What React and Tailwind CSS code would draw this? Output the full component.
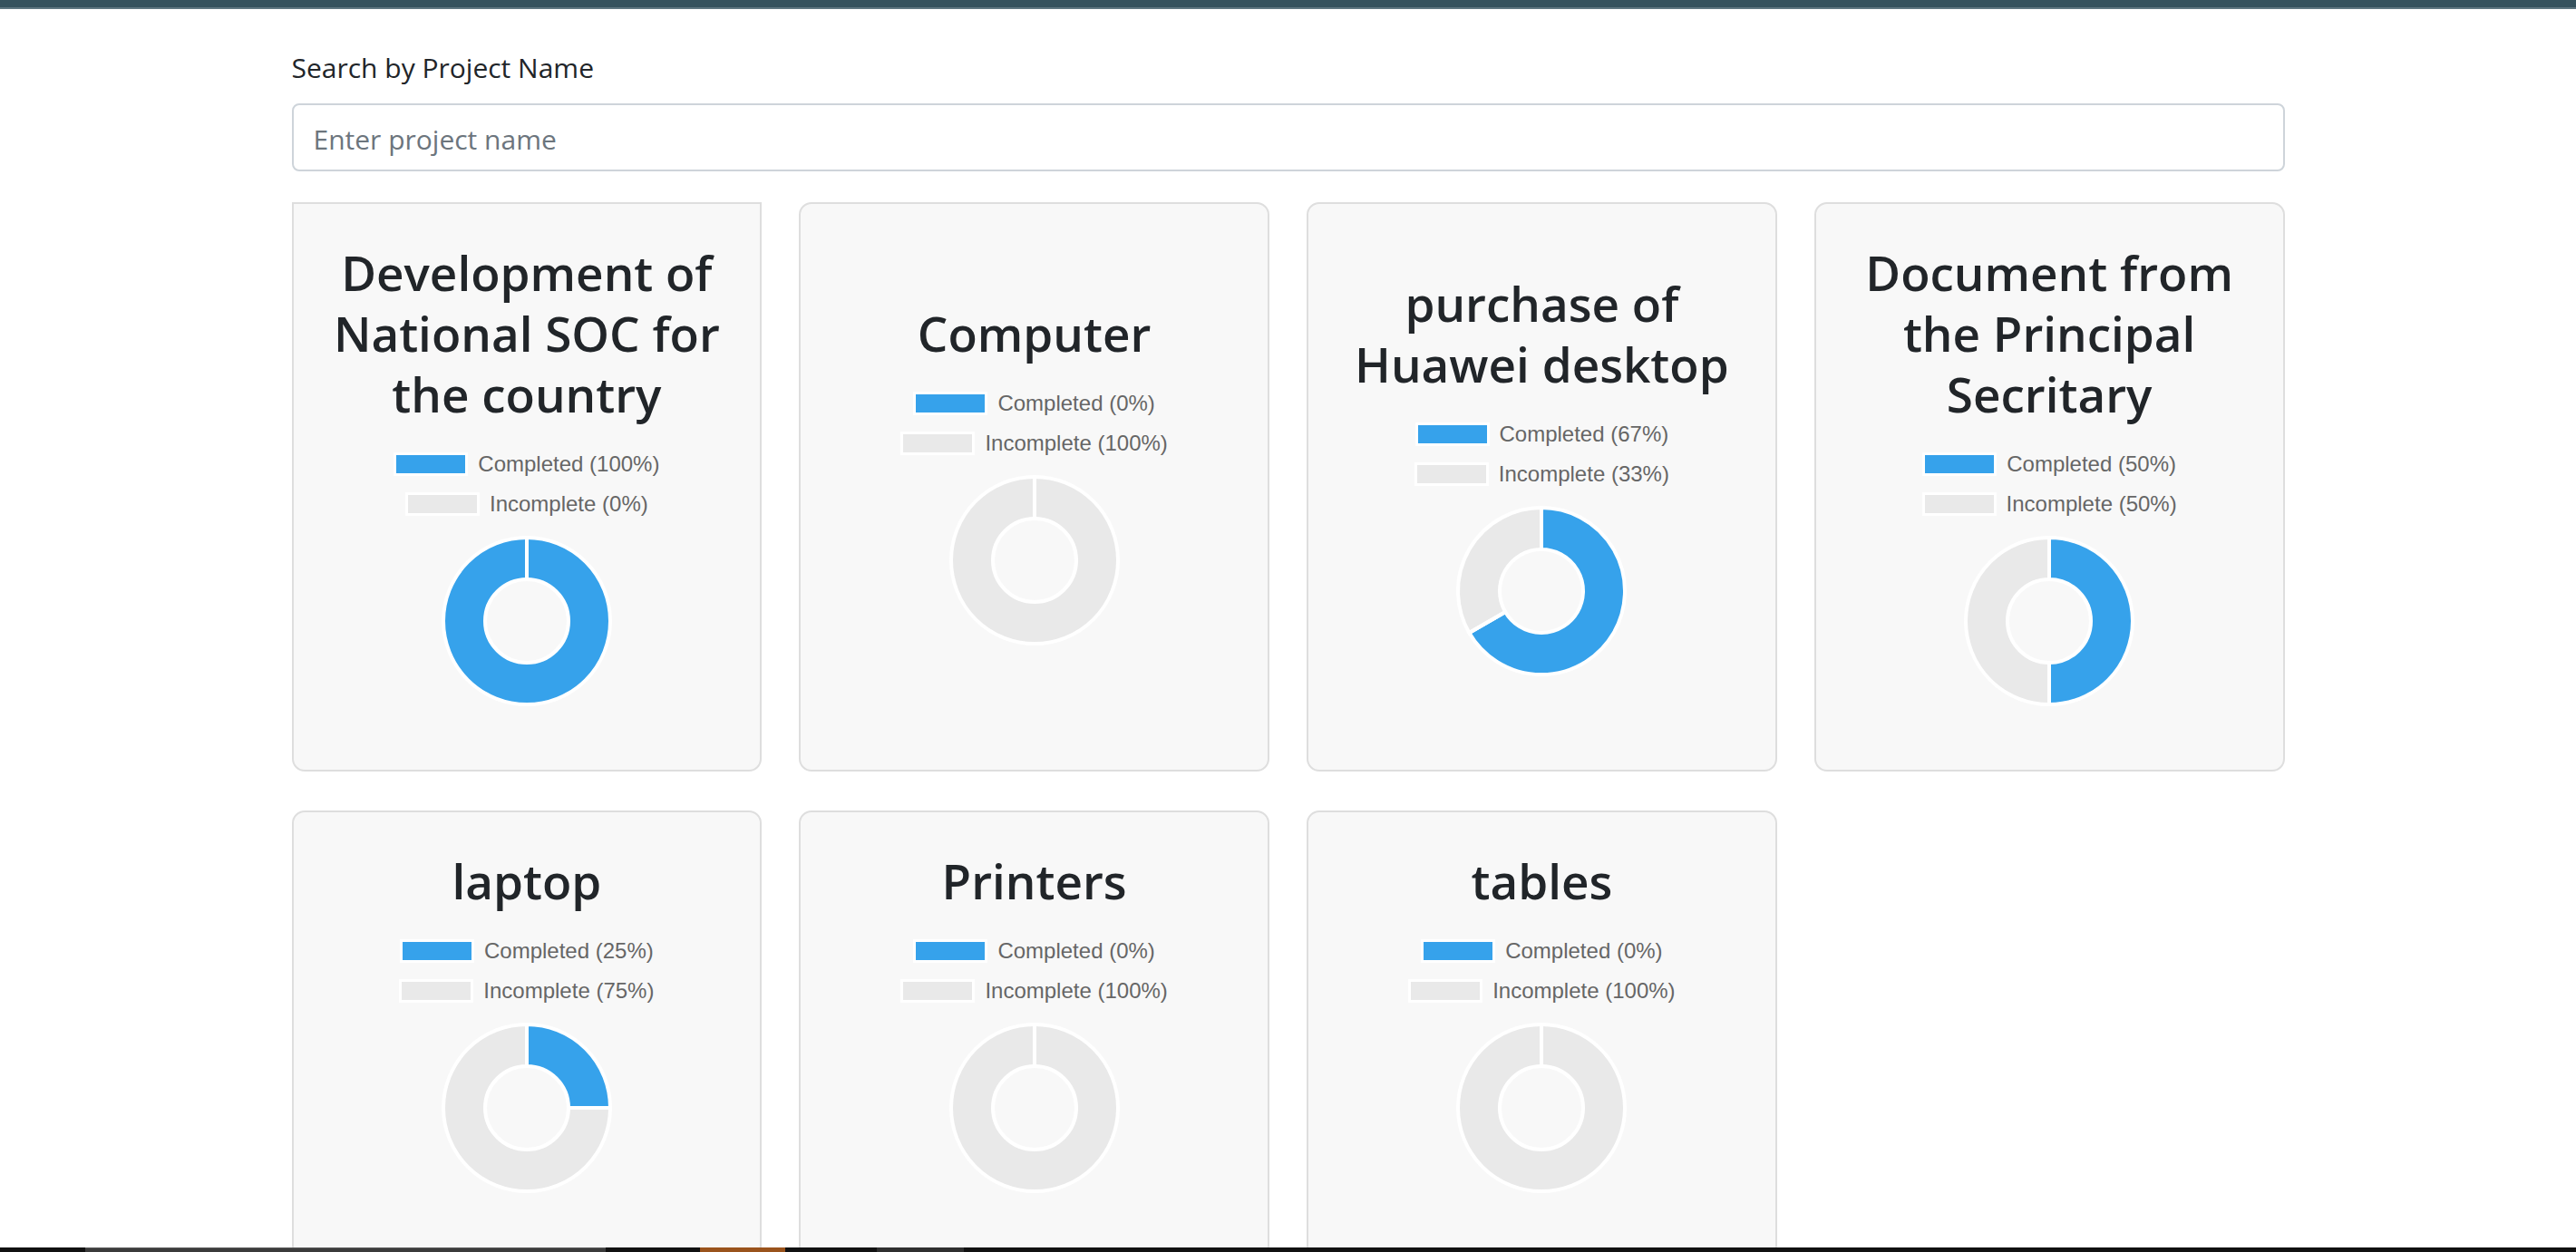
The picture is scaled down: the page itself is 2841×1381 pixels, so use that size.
import React from "react";

const projects = [
    { id: 1, name: "Development of\nNational SOC for\nthe country", done: 1, total: 1, squareTop: true },
    { id: 2, name: "Computer", done: 0, total: 1 },
    { id: 3, name: "purchase of\nHuawei desktop", done: 2, total: 3 },
    { id: 4, name: "Document from\nthe Principal\nSecritary", done: 1, total: 2 },
    { id: 5, name: "laptop", done: 1, total: 4 },
    { id: 6, name: "Printers", done: 0, total: 1 },
    { id: 7, name: "tables", done: 0, total: 1 },
];

const BLUE = "#36a2eb";
const GREY = "#e9e9e9";

// point on a circle, angle in degrees measured clockwise from 12 o'clock
const pt = (cx, cy, rad, deg) => {
    const a = (deg * Math.PI) / 180;
    return [cx + rad * Math.sin(a), cy - rad * Math.cos(a)];
};

const sector = (cx, cy, R, r, a0, a1) => {
    const large = a1 - a0 > 180 ? 1 : 0;
    const [x0, y0] = pt(cx, cy, R, a0);
    const [x1, y1] = pt(cx, cy, R, a1);
    const [x2, y2] = pt(cx, cy, r, a1);
    const [x3, y3] = pt(cx, cy, r, a0);
    return `M${x0} ${y0} A${R} ${R} 0 ${large} 1 ${x1} ${y1} L${x2} ${y2} A${r} ${r} 0 ${large} 0 ${x3} ${y3} Z`;
};

// whole ring, no seam
const ring = (cx, cy, R, r) =>
    `M${cx} ${cy - R} A${R} ${R} 0 1 1 ${cx} ${cy + R} A${R} ${R} 0 1 1 ${cx} ${cy - R} Z ` +
    `M${cx} ${cy - r} A${r} ${r} 0 1 0 ${cx} ${cy + r} A${r} ${r} 0 1 0 ${cx} ${cy - r} Z`;

const Donut = ({ done, total }) => {
    const size = 190;
    const c = size / 2;
    const R = 92;
    const r = 46;
    const split = (done / total) * 360;

    const segs = [];
    const pushArc = (a0, a1, color) => {
        if (a1 - a0 <= 0) return;
        if (a1 - a0 >= 359.99) {
            segs.push({ d: ring(c, c, R, r), color });
        } else {
            segs.push({ d: sector(c, c, R, r, a0, a1), color });
        }
    };
    pushArc(0, split, BLUE);
    pushArc(split, 360, GREY);

    const [ix0, iy0] = pt(c, c, r - 2, 0);
    const [ox0, oy0] = pt(c, c, R + 2, 0);
    const [ix1, iy1] = pt(c, c, r - 2, split);
    const [ox1, oy1] = pt(c, c, R + 2, split);

    return (
        <svg width={size} height={size} viewBox={`0 0 ${size} ${size}`} className="block">
            {segs.map((s, i) => (
                <path key={i} d={s.d} fill={s.color} fillRule="evenodd" stroke="#ffffff" strokeWidth="4" />
            ))}
            <line x1={ix0} y1={iy0} x2={ox0} y2={oy0} stroke="#ffffff" strokeWidth="4" />
            <line x1={ix1} y1={iy1} x2={ox1} y2={oy1} stroke="#ffffff" strokeWidth="4" />
        </svg>
    );
};

const LegendRow = ({ color, label }) => (
    <div className="flex items-center h-[26px]">
        <span className="block w-[82px] h-[26px] border-[3px] border-white" style={{ backgroundColor: color }} />
        <span className="ml-[11px] text-[24px] leading-[26px] text-[#666666] font-['Liberation_Sans',Arial,sans-serif]">
            {label}
        </span>
    </div>
);

const ProjectCard = ({ project }) => {
    const pct = Math.round((project.done / project.total) * 100);
    return (
        <div
            className={`flex flex-col justify-center items-center bg-[#f8f8f8] border-2 border-[#dedede] px-[38px] pt-[42px] pb-[69px] ${
                project.squareTop ? "rounded-b-[14px]" : "rounded-[14px]"
            }`}
        >
            <h3 className="whitespace-pre-line text-center text-[53px] leading-[67px] font-semibold text-[#212529]">
                {project.name}
            </h3>
            <div className="mt-[31px] flex flex-col items-center gap-[18px]">
                <LegendRow color={BLUE} label={`Completed (${pct}%)`} />
                <LegendRow color={GREY} label={`Incomplete (${100 - pct}%)`} />
            </div>
            <div className="mt-[21px]">
                <Donut done={project.done} total={project.total} />
            </div>
        </div>
    );
};

export default function App() {
    return (
        <div className="min-h-screen bg-white font-['Open_Sans','Noto_Sans',sans-serif]">
            {/* header strip */}
            <div className="h-[8px] bg-[#36525e]" />
            <div className="h-[2px] bg-[#5f7681]" />

            <main className="max-w-[2198px] mx-auto pt-[41px]">
                <label className="block text-[30px] leading-[48px] text-[#212529] mb-[15px]">
                    Search by Project Name
                </label>
                <input
                    type="text"
                    placeholder="Enter project name"
                    className="block w-full h-[75px] px-[22px] pt-[3px] text-[30px] text-[#495057] placeholder:text-[#6c757d] bg-white border-2 border-[#ced4da] rounded-[8px] outline-none"
                />

                <div className="grid grid-cols-4 gap-x-[41px] gap-y-[43px] mt-[34px]">
                    {projects.map((p) => (
                        <ProjectCard key={p.id} project={p} />
                    ))}
                </div>
            </main>

            {/* OS taskbar edge peeking in at the bottom of the capture */}
            <div className="fixed left-0 right-0 bottom-0 h-[5px] bg-[#111111]">
                <div className="absolute top-0 bottom-0 left-[94px] w-[574px] bg-[#3b3b3b] border-t border-[#5a5a5a]" />
                <div className="absolute top-0 bottom-0 left-[772px] w-[94px] bg-[#9a531c]" />
                <div className="absolute top-0 bottom-0 left-[967px] w-[96px] bg-[#2f2f2f]" />
            </div>
        </div>
    );
}
